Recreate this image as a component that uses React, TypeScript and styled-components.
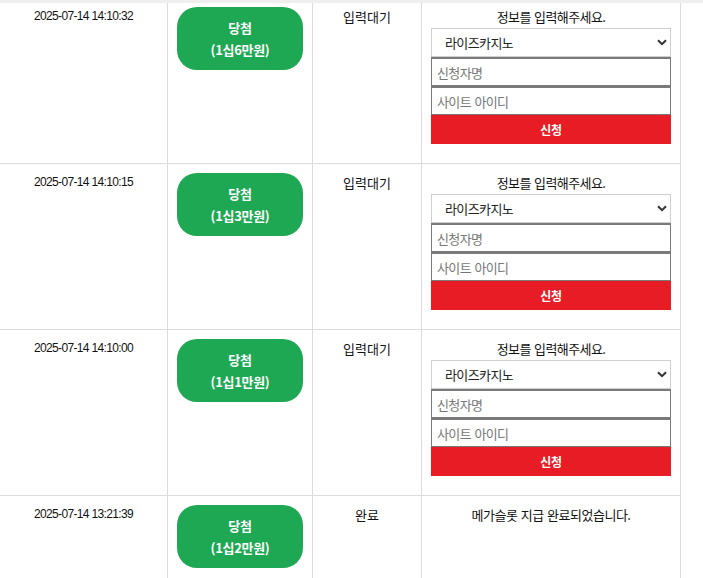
import React from "react";
import styled, { createGlobalStyle } from "styled-components";

const GlobalStyle = createGlobalStyle`
  html, body { margin: 0; padding: 0; background: #ffffff; }
  body { font-family: "Noto Sans CJK KR", "Noto Sans", sans-serif; color: #111; }
`;

const Viewport = styled.div`
  height: 578px;
  overflow: hidden;
  border-top: 3px solid #efefef;
  box-sizing: border-box;
`;

const Table = styled.div`
  width: 681px;
  margin-top: -5px;
`;

const Row = styled.div`
  display: grid;
  grid-template-columns: 168px 145px 109px 259px;
  height: 165px;
  border-bottom: 1px solid #dcdcdc;
  box-sizing: content-box;
`;

const Cell = styled.div`
  border-right: 1px solid #dcdcdc;
  box-sizing: border-box;
  text-align: center;
  min-width: 0;
`;

const DateCell = styled(Cell)`
  padding-top: 9px;
  font-family: "Liberation Sans", Arial, sans-serif;
  font-size: 12px;
  line-height: 18px;
  letter-spacing: -0.65px;
  color: #111;
`;

const PrizeCell = styled(Cell)`
  padding: 9px 9px 0;
`;

const Pill = styled.div`
  width: 126px;
  height: 63px;
  border-radius: 20px;
  background: #1ea853;
  color: #ffffff;
  display: flex;
  flex-direction: column;
  align-items: center;
  justify-content: center;
  font-weight: 700;
  font-size: 13px;
  line-height: 21.5px;
  letter-spacing: -0.3px;
`;

const StatusCell = styled(Cell)`
  padding-top: 10px;
  font-size: 13px;
  line-height: 18px;
  letter-spacing: 0px;
  color: #111;
`;

const FormCell = styled(Cell)`
  padding: 7px 9px 0;
  display: flex;
  flex-direction: column;
`;

const Title = styled.div`
  font-size: 13px;
  line-height: 23px;
  letter-spacing: -0.6px;
  word-spacing: 1px;
  color: #111;
`;

const Message = styled(Title)`
  letter-spacing: -0.5px;
`;

const SelectWrap = styled.div`
  position: relative;
  height: 29px;
`;

const Select = styled.select`
  appearance: none;
  -webkit-appearance: none;
  width: 100%;
  height: 29px;
  box-sizing: border-box;
  border: 1px solid #cfcfcf;
  border-radius: 0;
  background: #ffffff;
  padding: 0 0 0 13px;
  font-family: "Noto Sans CJK KR", sans-serif;
  font-size: 13px;
  letter-spacing: -0.6px;
  color: #222;
  outline: none;
`;

const Chevron = styled.svg`
  position: absolute;
  right: 4px;
  top: 11px;
  width: 10px;
  height: 7px;
  pointer-events: none;
`;

const Input = styled.input`
  display: block;
  width: 100%;
  height: 29px;
  box-sizing: border-box;
  border: 1px solid #7a7a7a;
  border-top-width: 2px;
  border-radius: 0;
  padding: 0 5px;
  margin: 0;
  font-family: "Noto Sans CJK KR", sans-serif;
  font-size: 13px;
  letter-spacing: -0.6px;
  word-spacing: 1px;
  color: #222;
  background: #fff;
  outline: none;
  &::placeholder { color: #777777; }
`;

const SubmitButton = styled.button`
  display: block;
  width: 100%;
  height: 29px;
  border: none;
  border-radius: 0;
  margin: 0;
  background: #e71c24;
  color: #ffffff;
  font-family: "Noto Sans CJK KR", sans-serif;
  font-weight: 700;
  font-size: 12px;
  letter-spacing: -0.3px;
  cursor: pointer;
`;

type Entry = {
  date: string;
  prize: string;
  status: string;
  message?: string;
};

const entries: Entry[] = [
  { date: "2025-07-14 14:10:32", prize: "(1십6만원)", status: "입력대기" },
  { date: "2025-07-14 14:10:15", prize: "(1십3만원)", status: "입력대기" },
  { date: "2025-07-14 14:10:00", prize: "(1십1만원)", status: "입력대기" },
  { date: "2025-07-14 13:21:39", prize: "(1십2만원)", status: "완료", message: "메가슬롯 지급 완료되었습니다." },
];

const ApplyForm: React.FC = () => (
  <>
    <Title>정보를 입력해주세요.</Title>
    <SelectWrap>
      <Select defaultValue="rise">
        <option value="rise">라이즈카지노</option>
      </Select>
      <Chevron viewBox="0 0 10 7">
        <path d="M1 1.2 L5 5.2 L9 1.2" fill="none" stroke="#333" strokeWidth="2" />
      </Chevron>
    </SelectWrap>
    <Input placeholder="신청자명" />
    <Input placeholder="사이트 아이디" />
    <SubmitButton type="button">신청</SubmitButton>
  </>
);

export default function App() {
  return (
    <>
      <GlobalStyle />
      <Viewport>
        <Table>
          {entries.map((e) => (
            <Row key={e.date}>
              <DateCell>{e.date}</DateCell>
              <PrizeCell>
                <Pill>
                  <span>당첨</span>
                  <span>{e.prize}</span>
                </Pill>
              </PrizeCell>
              <StatusCell>{e.status}</StatusCell>
              <FormCell>
                {e.message ? <Message>{e.message}</Message> : <ApplyForm />}
              </FormCell>
            </Row>
          ))}
        </Table>
      </Viewport>
    </>
  );
}
